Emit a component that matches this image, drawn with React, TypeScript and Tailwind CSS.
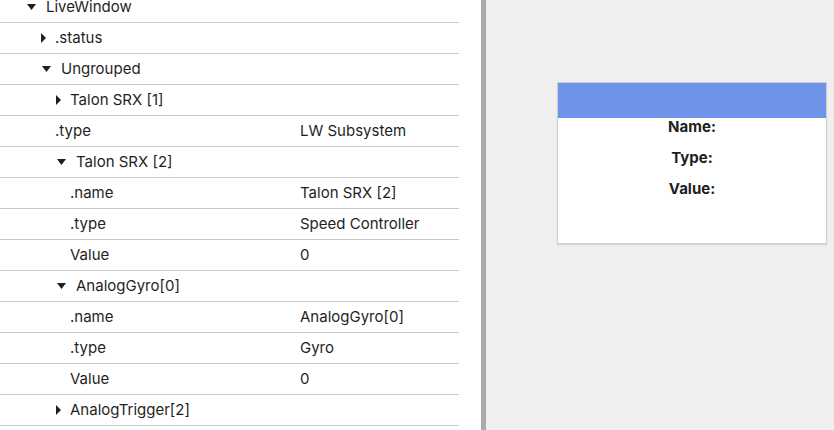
type Row = {
  label: string;
  level: number;
  toggle?: 'open' | 'closed';
  value?: string;
};

const ROWS: Row[] = [
  { label: 'LiveWindow', level: 0, toggle: 'open' },
  { label: '.status', level: 1, toggle: 'closed' },
  { label: 'Ungrouped', level: 1, toggle: 'open' },
  { label: 'Talon SRX [1]', level: 2, toggle: 'closed' },
  { label: '.type', level: 2, value: 'LW Subsystem' },
  { label: 'Talon SRX [2]', level: 2, toggle: 'open' },
  { label: '.name', level: 3, value: 'Talon SRX [2]' },
  { label: '.type', level: 3, value: 'Speed Controller' },
  { label: 'Value', level: 3, value: '0' },
  { label: 'AnalogGyro[0]', level: 2, toggle: 'open' },
  { label: '.name', level: 3, value: 'AnalogGyro[0]' },
  { label: '.type', level: 3, value: 'Gyro' },
  { label: 'Value', level: 3, value: '0' },
  { label: 'AnalogTrigger[2]', level: 2, toggle: 'closed' },
];

function Arrow({ open }: { open: boolean }) {
  // disclosure triangle, like the JavaFX tree table
  return open ? (
    <svg width="21" height="6" viewBox="0 0 21 6" className="shrink-0">
      <polygon points="2,0 11,0 6.5,6" fill="#1f1f1f" />
    </svg>
  ) : (
    <svg width="15" height="10" viewBox="0 0 15 10" className="shrink-0">
      <polygon points="1,0 6,5 1,10" fill="#1f1f1f" />
    </svg>
  );
}

function TreeRow({ row }: { row: Row }) {
  return (
    <div className="flex h-[31px] items-center border-b border-[#c9c9c9] text-[15px] text-[#1f1f1f]">
      <div className="flex w-[300px] items-center" style={{ paddingLeft: 25 + row.level * 15 }}>
        {row.toggle && <Arrow open={row.toggle === 'open'} />}
        <span>{row.label}</span>
      </div>
      <span>{row.value ?? ''}</span>
    </div>
  );
}

export default function App() {
  return (
    <div
      className="flex h-[430px] w-[834px] overflow-hidden bg-[#efefef]"
      style={{ fontFamily: 'Inter, "Liberation Sans", sans-serif' }}
    >
      {/* tree table */}
      <div className="w-[481px] shrink-0 overflow-hidden bg-white">
        <div className="-mt-[8px] w-[459px]">
          {ROWS.map((r, i) => (
            <TreeRow key={i} row={r} />
          ))}
        </div>
      </div>
      <div className="w-[5px] shrink-0 bg-[#aaaaaa]" />

      {/* widget canvas */}
      <div className="flex-1 pl-[71px] pt-[82px]">
        <div className="w-[270px] border border-[#cfcfcf] bg-white shadow-[0_1px_1px_rgba(0,0,0,0.1)]">
          <div className="h-[35px] bg-[#6f93e8]" />
          <div className="flex h-[125px] flex-col items-center gap-[13px] text-[15px] font-bold leading-[18px] text-[#1f1f1f]">
            <span>Name:</span>
            <span>Type:</span>
            <span>Value:</span>
          </div>
        </div>
      </div>
    </div>
  );
}
